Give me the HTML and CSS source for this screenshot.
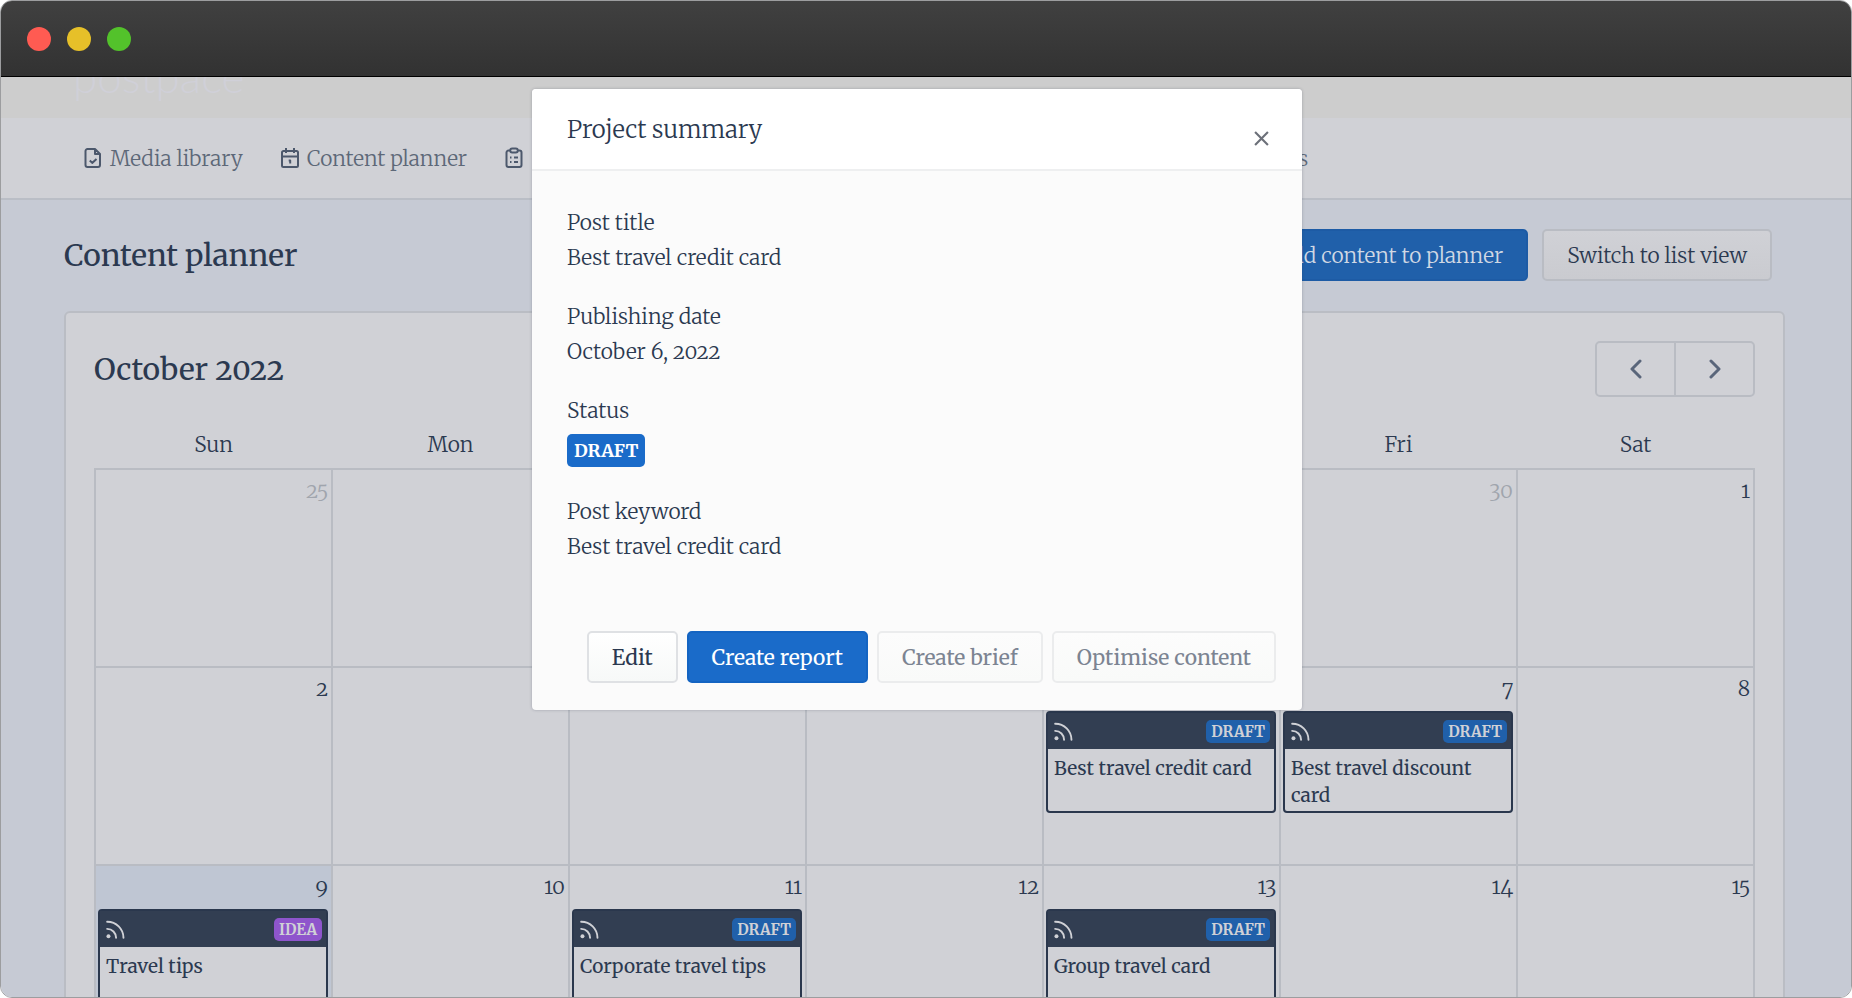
FILE: index.html
```html
<!DOCTYPE html>
<html lang="en">
<head>
<meta charset="utf-8">
<title>Content planner</title>
<link rel="stylesheet" href="styles.css">
</head>
<body>
<svg class="sprite" aria-hidden="true">
  <symbol id="rss" viewBox="0 0 20 20"><circle cx="2.6" cy="17.2" r="2.1" fill="currentColor"/><path d="M1.2 9.3A9.4 9.4 0 0 1 10.6 18.8M1.2 1.8A17 17 0 0 1 18.4 18.8" fill="none" stroke="currentColor" stroke-width="2" stroke-linecap="round"/></symbol>
</svg>
<div class="window">
  <header class="titlebar">
    <span class="light light-red"></span><span class="light light-yellow"></span><span class="light light-green"></span>
  </header>
  <div class="page">
    <div class="brand"><span class="brand-name">postpace</span></div>
    <nav class="nav">
      <a class="nav-link" href="#">
        <svg class="nav-icon" viewBox="0 0 18 22"><path d="M3.500 2h7.500l5 5v11a2 2 0 0 1-2 2h-10.500a2 2 0 0 1-2-2v-14a2 2 0 0 1 2-2zM11 2v5h5M5.800 13.500l2.400 2.400 4.300-4"/></svg>Media library</a>
      <a class="nav-link" href="#">
        <svg class="nav-icon" viewBox="0 0 18 22"><path d="M2.500 4h13a1.500 1.500 0 0 1 1.500 1.500v13a1.500 1.500 0 0 1-1.500 1.500h-13a1.500 1.500 0 0 1-1.500-1.500v-13a1.500 1.500 0 0 1 1.500-1.500zM1 9.500h16M5 1v5M13 1v5M7.700 13.500h1.500v3"/></svg>Content planner</a>
      <a class="nav-link" href="#" aria-label="Briefs">
        <svg class="nav-icon" viewBox="0 0 18 22"><path d="M5.500 3.500h-2a2 2 0 0 0-2 2v12.500a2 2 0 0 0 2 2h11a2 2 0 0 0 2-2v-12.500a2 2 0 0 0-2-2h-2M7.200 1.500h3.600a1.700 1.700 0 0 1 0 4h-3.600a1.700 1.700 0 0 1 0-4zM5 10.500h1.500M9 10.500h4M5 15h1.500M9 15h4"/></svg></a>
      <a class="nav-link nav-last" href="#">Reports</a>
    </nav>
    <main class="main">
      <div class="heading">
        <h1 class="title">Content planner</h1>
        <button class="btn btn-dim-primary" type="button">Add content to planner</button>
        <button class="btn btn-dim" type="button">Switch to list view</button>
      </div>
      <section class="card">
        <div class="card-head">
          <h2 class="title">October 2022</h2>
          <div class="pager">
            <button class="pager-btn" type="button" aria-label="Previous month"><svg class="chevron" viewBox="0 0 12 20"><path d="M10 2L2 10l8 8"/></svg></button>
            <button class="pager-btn" type="button" aria-label="Next month"><svg class="chevron" viewBox="0 0 12 20"><path d="M2 2l8 8-8 8"/></svg></button>
          </div>
        </div>
        <table class="calendar">
          <thead><tr><th>Sun</th><th>Mon</th><th>Tue</th><th>Wed</th><th>Thu</th><th>Fri</th><th>Sat</th></tr></thead>
          <tbody>
            <tr>
              <td><div class="day outside">25</div></td><td><div class="day outside">26</div></td><td><div class="day outside">27</div></td><td><div class="day outside">28</div></td><td><div class="day outside">29</div></td><td><div class="day outside">30</div></td><td><div class="day">1</div></td>
            </tr>
            <tr>
              <td><div class="day">2</div></td><td><div class="day">3</div></td><td><div class="day">4</div></td><td><div class="day">5</div></td>
              <td><div class="day">6</div>
                <article class="event"><div class="event-head"><svg class="rss"><use href="#rss"/></svg><span class="tag">DRAFT</span></div><p class="event-title">Best travel credit card</p></article></td>
              <td><div class="day">7</div>
                <article class="event"><div class="event-head"><svg class="rss"><use href="#rss"/></svg><span class="tag">DRAFT</span></div><p class="event-title">Best travel discount card</p></article></td>
              <td><div class="day">8</div></td>
            </tr>
            <tr>
              <td class="today"><div class="day">9</div>
                <article class="event"><div class="event-head"><svg class="rss"><use href="#rss"/></svg><span class="tag tag-idea">IDEA</span></div><p class="event-title">Travel tips</p></article></td>
              <td><div class="day">10</div></td>
              <td><div class="day">11</div>
                <article class="event"><div class="event-head"><svg class="rss"><use href="#rss"/></svg><span class="tag">DRAFT</span></div><p class="event-title">Corporate travel tips</p></article></td>
              <td><div class="day">12</div></td>
              <td><div class="day">13</div>
                <article class="event"><div class="event-head"><svg class="rss"><use href="#rss"/></svg><span class="tag">DRAFT</span></div><p class="event-title">Group travel card</p></article></td>
              <td><div class="day">14</div></td><td><div class="day">15</div></td>
            </tr>
          </tbody>
        </table>
      </section>
    </main>
    <div class="overlay">
      <div class="modal" role="dialog" aria-modal="true" aria-labelledby="modal-title">
        <div class="modal-head">
          <h2 class="modal-title" id="modal-title">Project summary</h2>
          <button class="close" type="button" aria-label="Close"><svg class="close-icon" viewBox="0 0 14 14"><path d="M1 1l12 12M13 1L1 13"/></svg></button>
        </div>
        <dl class="fields">
          <div class="field"><dt>Post title</dt><dd>Best travel credit card</dd></div>
          <div class="field"><dt>Publishing date</dt><dd>October 6, 2022</dd></div>
          <div class="field"><dt>Status</dt><dd class="status"><span class="badge">DRAFT</span></dd></div>
          <div class="field"><dt>Post keyword</dt><dd>Best travel credit card</dd></div>
        </dl>
        <div class="actions">
          <button class="btn" type="button">Edit</button>
          <button class="btn btn-primary" type="button">Create report</button>
          <button class="btn" type="button" disabled>Create brief</button>
          <button class="btn" type="button" disabled>Optimise content</button>
        </div>
      </div>
    </div>
  </div>
</div>
</body>
</html>
```
FILE: styles.css
```css
* { box-sizing: border-box; }
body, h1, h2, p, dl, dd { margin: 0; }
body, button {
  font-family: Merriweather, "DejaVu Serif Condensed", "Liberation Serif", serif;
  font-weight: 300;
  font-size: 21px;
  font-optical-sizing: none;
  font-variant-numeric: oldstyle-nums;
  color: #2b3950;
}
body { background: #fff; }
.sprite { position: absolute; width: 0; height: 0; }

.window {
  height: 100vh;
  display: flex;
  flex-direction: column;
  overflow: hidden;
  border: 1px solid #9c9d9f;
  border-radius: 12px;
}
.titlebar {
  flex: none;
  display: flex;
  align-items: center;
  gap: 16px;
  height: 76px;
  padding-left: 26px;
  background: linear-gradient(#404040, #323232);
  border-bottom: 1px solid #000;
}
.light { width: 24px; height: 24px; border-radius: 50%; }
.light-red { background: #ff5b52; }
.light-yellow { background: #e6c029; }
.light-green { background: #53c22b; }

.page { position: relative; flex: 1; min-height: 0; overflow: hidden; background: #c6cad4; }
.brand {
  display: flex;
  align-items: flex-end;
  height: 41px;
  padding: 0 0 20px 72px;
  overflow: hidden;
  background: #cdcdcd;
}
.brand-name {
  font-family: Lato, sans-serif;
  font-weight: 300;
  font-size: 44px;
  line-height: 44px;
  color: #d0d0d8;
}
.nav {
  display: flex;
  align-items: center;
  gap: 38px;
  height: 82px;
  padding-left: 83px;
  background: #d0d1d6;
  border-bottom: 2px solid #babec6;
}
.nav-link {
  display: flex;
  align-items: center;
  gap: 8px;
  color: #5d6878;
  text-decoration: none;
}
.nav-icon { width: 18px; height: 22px; fill: none; stroke: #4c586c; stroke-width: 2; stroke-linejoin: round; }
.nav-last { flex: 1; max-width: 747px; justify-content: flex-end; }

.main { padding: 29px 66px 0 63px; }
.heading { display: flex; align-items: center; gap: 14px; padding-right: 13px; margin-bottom: 30px; }
.title { flex: 1; font-size: 30px; font-weight: 400; line-height: 36px; }
.btn {
  height: 52px;
  padding: 0 23px;
  font-weight: 400;
  white-space: nowrap;
  border: 2px solid #dfe1e4;
  border-radius: 5px;
  background: linear-gradient(#fff, #f7f9f8);
}
.btn:disabled { color: #7c8492; border-color: #ebeced; background: linear-gradient(#fcfcfc, #f9faf9); }
.btn-primary { color: #fff; background: #1a6bc9; border-color: #1464c2; }
.heading .btn { font-weight: 300; }
.btn-dim { background: linear-gradient(#d0d1d6, #cacbd0); border-color: #b9bcc3; }
.btn-dim-primary { color: #d0d8e4; background: #2060aa; border-color: #1d5ba5; }

.card {
  height: 900px;
  padding: 28px 28px 0;
  background: #d0d1d6;
  border: 2px solid #babdc4;
  border-radius: 6px;
}
.card-head { display: flex; align-items: center; }
.pager { display: flex; border: 2px solid #b9bcc3; border-radius: 5px; }
.pager-btn { display: grid; place-items: center; width: 77px; height: 52px; padding: 0; border: 0; background: none; }
.pager-btn + .pager-btn { width: 79px; border-left: 2px solid #b9bcc3; }
.chevron { width: 12px; height: 20px; fill: none; stroke: #59657a; stroke-width: 3; stroke-linecap: round; stroke-linejoin: round; }

.calendar { width: 100%; margin-top: 24px; table-layout: fixed; border-collapse: collapse; }
.calendar th { height: 48px; padding: 0; font-weight: 300; }
.calendar td { height: 198px; padding: 0 3px 0 2px; vertical-align: top; border: 2px solid #b9bcc3; }
.calendar .today { background: #bfc6d3; }
.day { height: 43px; line-height: 41px; text-align: right; }
.outside { color: #a0a5ad; }
.event { min-height: 102px; border: 2px solid #2a374d; border-radius: 4px; background: #d0d1d6; }
.event-head {
  display: flex;
  align-items: center;
  justify-content: space-between;
  height: 36px;
  padding: 0 4px 0 6px;
  color: #d0d1d6;
  background: #323e52;
}
.rss { width: 19px; height: 19px; }
.tag { padding: 0 5px; font-size: 15px; line-height: 23px; font-weight: 700; border-radius: 5px; background: #2060aa; }
.tag-idea { background: #8e55cc; }
.event-title { padding: 6px 6px 2px; font-size: 19px; font-weight: 400; line-height: 27px; }

.overlay { position: absolute; inset: 0; padding: 12px 18px 0 0; }
.modal {
  max-width: 770px;
  margin: 0 auto;
  background: #fbfbfb;
  border-radius: 4px;
  box-shadow: 0 0 3px rgba(40, 50, 70, .3);
}
.modal-head {
  display: flex;
  align-items: center;
  justify-content: space-between;
  height: 82px;
  padding: 2px 33px 0 35px;
  background: #fff;
  border-bottom: 2px solid #eeeff0;
  border-radius: 4px 4px 0 0;
}
.modal-title { font-size: 24px; font-weight: 300; line-height: 32px; }
.close { display: grid; place-items: center; padding: 0; width: 15px; height: 15px; margin-top: 16px; border: 0; background: none; }
.close-icon { width: 15px; height: 15px; stroke: #6c7079; stroke-width: 2; }
.fields { padding: 34px 35px 0; line-height: 35px; }
.field { margin-bottom: 24px; }
.status { padding: 5px 0 3px; line-height: 33px; }
.badge { display: inline-block; padding: 0 7px; font-size: 18px; font-weight: 700; color: #fff; background: #1a6bc9; border-radius: 5px; }
.actions { display: flex; justify-content: flex-end; gap: 9px; padding: 43px 26px 27px; }
```
